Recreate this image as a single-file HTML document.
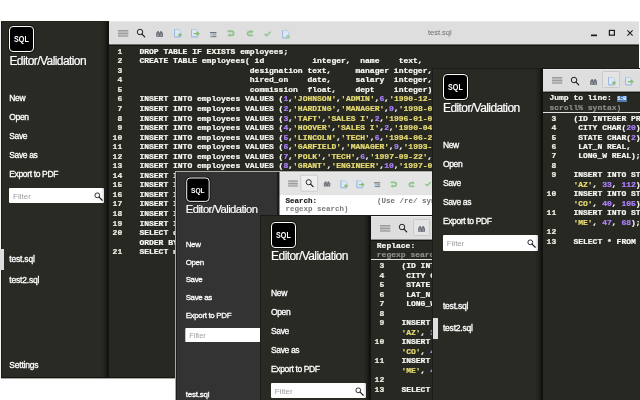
<!DOCTYPE html><html><head><meta charset="utf-8"><title>SQL Editor</title><style>
html,body{margin:0;padding:0}
#all{position:absolute;left:0;top:0;width:640px;height:400px;overflow:hidden;will-change:transform}
body{width:640px;height:400px;background:#fff;position:relative;overflow:hidden;font-family:"Liberation Sans",sans-serif}
.win{position:absolute;overflow:hidden;background:#272822}
.side{position:absolute;left:0;top:0;bottom:0;width:109px;color:#fff}
.sin{position:absolute;width:109px;height:400px}
.divd{position:absolute;top:0;bottom:0}
.logo{position:absolute;left:10.5px;top:5.6px;width:23px;height:24px;border:1.1px solid #fff;border-radius:4px;background:#000;box-shadow:0 0 0 0.9px #141412;color:#fff;font-size:8.2px;text-align:center;line-height:25px}
.logo span{display:inline-block;font-weight:bold;transform:scaleX(0.87)}
.ttl{position:absolute;left:10.5px;top:33.1px;font-size:12px;line-height:15px;letter-spacing:-0.58px;white-space:nowrap;-webkit-text-stroke:0.2px #fff}
.mi{position:absolute;left:10.4px;font-size:8.5px;line-height:12px;letter-spacing:-0.36px;white-space:nowrap;-webkit-text-stroke:0.3px #fff}
.fi{letter-spacing:-0.2px}
.flt{position:absolute;left:10px;top:167px;height:15.3px;width:95.2px;background:#fff;border-radius:1px}
.flt span{position:absolute;left:4.2px;top:4.2px;font-size:8px;line-height:10px;color:#a0a0a0}
.flt .mag{position:absolute;right:1.6px;top:4.2px}
.selbar{position:absolute;left:0;width:5.2px;height:21.2px;background:#dedede}
.main{position:absolute;top:0;right:0;bottom:0}
.tb{position:absolute;left:0;right:0;top:0;background:#dedede;box-shadow:inset 0 1px 0 #ececec}
.tbm{position:absolute;left:0;right:0;height:1px}
.ic{position:absolute;line-height:0}
.act{position:absolute;background:#e4e4e4;border:1px solid #c9c9c9;box-sizing:border-box;border-radius:1.5px}
.code{position:absolute;left:0;right:0;font-family:"Liberation Mono",monospace;font-weight:bold;font-size:8px;line-height:9.55px;color:#f8f8f2;white-space:pre;-webkit-text-stroke:0.22px}
.ln{height:9.55px;position:relative}
.no{position:absolute;left:0;width:13.2px;text-align:right;color:#f0efe4}
.tx{position:absolute;left:30.4px}
i{font-style:normal}
.s{color:#e6db74}
.n{color:#ae81ff}
.dlg{position:absolute;left:0;right:0;font-family:"Liberation Mono",monospace;font-weight:bold;font-size:8px;line-height:9.4px;white-space:pre;-webkit-text-stroke:0.2px}
.title{position:absolute;font-size:7.5px;line-height:10px;color:#6d6d6d}
.wc{position:absolute;top:0}
</style></head><body><div id="all"><div class="win" style="left:-1px;top:21px;width:640px;height:357px;"><div class="side" style="background:#292a24"><div class="sin" style="left:-0.1px;top:-0.3px"><div class="logo"><span>SQL</span></div><div class="ttl">Editor/Validation</div><div class="mi" style="top:70.9px">New</div><div class="mi" style="top:89.9px">Open</div><div class="mi" style="top:108.9px">Save</div><div class="mi" style="top:127.9px">Save as</div><div class="mi" style="top:146.9px">Export to PDF</div><div class="flt"><span>Filter</span><svg class="mag" width="9" height="9" viewBox="0 0 9 9"><circle cx="3.3" cy="3.3" r="2.4" fill="none" stroke="#222" stroke-width="0.95"/><path d="M5.1 5.1 L8.2 8.2" stroke="#222" stroke-width="1.25" stroke-linecap="round"/></svg></div><div class="mi fi" style="top:232.2px">test.sql</div><div class="mi fi" style="top:253.4px">test2.sql</div><div class="mi fi" style="top:338.2px">Settings</div><div class="selbar" style="top:228.1px"></div></div></div><div class="divd" style="background:linear-gradient(to right,rgba(0,0,0,0),rgba(0,0,0,0.18) 45%,#121210 82%,#121210);left:102.39999999999999px;width:7.800000000000001px"></div><div class="main" style="background:#272822;left:110px"><div class="tb" style="height:23px"><div class="ic" style="left:8.85px;top:8.5px"><svg width="10.35" height="6.8" viewBox="0 0 10.35 6.8" style="overflow:visible"><rect x="0" y="0" width="10.35" height="1.55" fill="#9b9b9b"/><rect x="0" y="2.5" width="10.35" height="1.9" fill="#9b9b9b"/><rect x="0" y="5.3" width="10.35" height="1.4" fill="#9b9b9b"/></svg></div><div class="ic" style="left:26.95px;top:7.0px"><svg width="11" height="11" viewBox="0 0 11 11" style="overflow:visible"><circle cx="4" cy="4" r="2.75" fill="none" stroke="#1a1a1a" stroke-width="0.95"/><path d="M6.05 6.05 L8.7 8.8" stroke="#1a1a1a" stroke-width="1.2" stroke-linecap="round"/></svg></div><div class="ic" style="left:46.85px;top:9.7px"><svg width="7.2" height="5.9" viewBox="0 0 7.2 5.9" style="overflow:visible;opacity:0.86"><path d="M1.2 0.3 H3 V1.6 H4.2 V0.3 H6 V1.6 H7 V5.7 H0.2 V1.6 H1.2 Z" fill="#4f555f"/><rect x="1" y="3.2" width="1.9" height="1.8" fill="#8a9099"/><rect x="4.3" y="3.2" width="1.9" height="1.8" fill="#8a9099"/><rect x="0.2" y="2.1" width="6.8" height="0.6" fill="#7b818a"/></svg></div><div class="ic" style="left:64.95px;top:8.2px"><svg width="7.8" height="8.6" viewBox="0 0 7.8 8.6" style="overflow:visible;opacity:0.86"><path d="M0.5 0.4 H4.8 L6.9 2.4 V7.9 H0.5 Z" fill="#dbe8f6" stroke="#a6c2e3" stroke-width="0.8"/><path d="M0.5 0.4 V7.9 H6.9" fill="none" stroke="#8fb2dd" stroke-width="0.9"/><path d="M3.9 5.9 H6.2 M5.3 4.5 L7.2 5.9 L5.3 7.3" stroke="#78b865" stroke-width="1.3" fill="none"/></svg></div><div class="ic" style="left:82.35px;top:8.2px"><svg width="8.4" height="8.6" viewBox="0 0 8.4 8.6" style="overflow:visible;opacity:0.86"><path d="M0.5 0.4 H4.8 L6.9 2.4 V7.9 H0.5 Z" fill="#dbe8f6" stroke="#a6c2e3" stroke-width="0.8"/><path d="M0.5 0.4 V7.9 H6.9" fill="none" stroke="#8fb2dd" stroke-width="0.9"/><path d="M2.8 4.6 H6.6 M5.7 3 L7.8 4.6 L5.7 6.2" stroke="#78b865" stroke-width="1.4" fill="none"/></svg></div><div class="ic" style="left:101.35px;top:10.5px"><svg width="6.5" height="5.4" viewBox="0 0 6.5 5.4" style="overflow:visible;opacity:0.86"><rect x="0" y="0" width="6.4" height="1.3" fill="#5f6368"/><rect x="0" y="1.8" width="2.6" height="1.7" fill="#9cc4ec"/><rect x="2.6" y="1.8" width="3.8" height="1.7" fill="#9a9da2"/><rect x="0.6" y="4" width="5.8" height="1.2" fill="#74787d"/></svg></div><div class="ic" style="left:118.45px;top:9.3px"><svg width="7.6" height="6.4" viewBox="0 0 7.6 6.4" style="overflow:visible;opacity:0.86"><path d="M0.6 1.2 H4.6 A2 2 0 0 1 4.6 5.2 H2.6" stroke="#84c181" stroke-width="1.9" fill="none"/><path d="M3 3.3 L0.4 5.2 L3 7 Z" fill="#84c181"/></svg></div><div class="ic" style="left:136.95px;top:9.3px"><svg width="7.6" height="6.4" viewBox="0 0 7.6 6.4" style="overflow:visible;opacity:0.86"><path d="M5 1.7 H3 A1.9 1.9 0 0 0 3 5.4 H7" stroke="#84c181" stroke-width="1.9" fill="none"/><path d="M4.6 -0.4 L7.6 1.7 L4.6 3.8 Z" fill="#84c181"/></svg></div><div class="ic" style="left:154.95px;top:10.0px"><svg width="7" height="5.6" viewBox="0 0 7 5.6" style="overflow:visible;opacity:0.86"><path d="M0.7 2.9 L2.7 4.7 L6.5 0.7" stroke="#84c181" stroke-width="1.6" fill="none"/></svg></div><div class="ic" style="left:173.35px;top:8.5px"><svg width="7.8" height="8.4" viewBox="0 0 7.8 8.4" style="overflow:visible;opacity:0.86"><path d="M0.5 0.4 H4.8 L6.9 2.4 V7.9 H0.5 Z" fill="#dbe8f6" stroke="#a6c2e3" stroke-width="0.8"/><path d="M0.5 0.4 V7.9 H6.9" fill="none" stroke="#8fb2dd" stroke-width="0.9"/><circle cx="6" cy="6.8" r="1.75" fill="#7fbf72"/><path d="M5.5 5.9 L6.9 6.8 L5.5 7.7 Z" fill="#f4f8ff"/></svg></div><div class="tbm" style="top:23px;background:#6e6e6e"></div><div class="tbm" style="top:24px;background:#141412"></div><div class="title" style="left:318.9px;top:6.9px">test.sql</div><svg class="wc" style="left:471px" width="60" height="24" viewBox="0 0 60 24"><path d="M11 14.35 H17" stroke="#1c1c1c" stroke-width="1.7"/><rect x="29.4" y="9.4" width="5" height="4.8" fill="none" stroke="#1c1c1c" stroke-width="1.2"/><path d="M47.4 9.4 L52.6 14.6 M52.6 9.4 L47.4 14.6" stroke="#1c1c1c" stroke-width="1.1"/></svg></div><div class="code" style="top:25.7px;line-height:9.55px"><div class="ln" style="height:9.55px"><span class="no">1</span><span class="tx">DROP TABLE IF EXISTS employees;</span></div><div class="ln" style="height:9.55px"><span class="no">2</span><span class="tx">CREATE TABLE employees( id          integer,  name    text,</span></div><div class="ln" style="height:9.55px"><span class="no">3</span><span class="tx">                       designation text,     manager integer,</span></div><div class="ln" style="height:9.55px"><span class="no">4</span><span class="tx">                       hired_on    date,     salary  integer,</span></div><div class="ln" style="height:9.55px"><span class="no">5</span><span class="tx">                       commission  float,    dept    integer);</span></div><div class="ln" style="height:9.55px"><span class="no">6</span><span class="tx">INSERT INTO employees VALUES (<i class="n">1</i>,<i class="s">'JOHNSON'</i>,<i class="s">'ADMIN'</i>,<i class="n">6</i>,<i class="s">'1990-12-17'</i>,<i class="n">18000</i>,NULL,<i class="n">4</i>);</span></div><div class="ln" style="height:9.55px"><span class="no">7</span><span class="tx">INSERT INTO employees VALUES (<i class="n">2</i>,<i class="s">'HARDING'</i>,<i class="s">'MANAGER'</i>,<i class="n">9</i>,<i class="s">'1998-02-02'</i>,<i class="n">52000</i>,<i class="n">300</i>,<i class="n">3</i>);</span></div><div class="ln" style="height:9.55px"><span class="no">8</span><span class="tx">INSERT INTO employees VALUES (<i class="n">3</i>,<i class="s">'TAFT'</i>,<i class="s">'SALES I'</i>,<i class="n">2</i>,<i class="s">'1996-01-02'</i>,<i class="n">25000</i>,<i class="n">500</i>,<i class="n">3</i>);</span></div><div class="ln" style="height:9.55px"><span class="no">9</span><span class="tx">INSERT INTO employees VALUES (<i class="n">4</i>,<i class="s">'HOOVER'</i>,<i class="s">'SALES I'</i>,<i class="n">2</i>,<i class="s">'1990-04-02'</i>,<i class="n">27000</i>,NULL,<i class="n">3</i>);</span></div><div class="ln" style="height:9.55px"><span class="no">10</span><span class="tx">INSERT INTO employees VALUES (<i class="n">5</i>,<i class="s">'LINCOLN'</i>,<i class="s">'TECH'</i>,<i class="n">6</i>,<i class="s">'1994-06-23'</i>,<i class="n">22500</i>,<i class="n">1400</i>,<i class="n">4</i>);</span></div><div class="ln" style="height:9.55px"><span class="no">11</span><span class="tx">INSERT INTO employees VALUES (<i class="n">6</i>,<i class="s">'GARFIELD'</i>,<i class="s">'MANAGER'</i>,<i class="n">9</i>,<i class="s">'1993-05-01'</i>,<i class="n">54000</i>,NULL,<i class="n">4</i>);</span></div><div class="ln" style="height:9.55px"><span class="no">12</span><span class="tx">INSERT INTO employees VALUES (<i class="n">7</i>,<i class="s">'POLK'</i>,<i class="s">'TECH'</i>,<i class="n">6</i>,<i class="s">'1997-09-22'</i>,<i class="n">25000</i>,NULL,<i class="n">4</i>);</span></div><div class="ln" style="height:9.55px"><span class="no">13</span><span class="tx">INSERT INTO employees VALUES (<i class="n">8</i>,<i class="s">'GRANT'</i>,<i class="s">'ENGINEER'</i>,<i class="n">10</i>,<i class="s">'1997-03-30'</i>,<i class="n">32000</i>,NULL,<i class="n">2</i>);</span></div><div class="ln" style="height:9.55px"><span class="no">14</span><span class="tx">INSERT INTO employees VALUES (<i class="n">9</i>,<i class="s">'JACKSON'</i>,<i class="s">'CEO'</i>,NULL,<i class="s">'1990-01-01'</i>,<i class="n">75000</i>,NULL,<i class="n">4</i>);</span></div><div class="ln" style="height:9.55px"><span class="no">15</span><span class="tx">INSERT INTO employees VALUES (<i class="n">10</i>,<i class="s">'FILLMORE'</i>,<i class="s">'MANAGER'</i>,<i class="n">9</i>,<i class="s">'1994-08-09'</i>,<i class="n">56000</i>,NULL,<i class="n">2</i>);</span></div><div class="ln" style="height:9.55px"><span class="no">16</span><span class="tx">INSERT INTO employees VALUES (<i class="n">11</i>,<i class="s">'ADAMS'</i>,<i class="s">'ENGINEER'</i>,<i class="n">10</i>,<i class="s">'1996-03-15'</i>,<i class="n">34000</i>,NULL,<i class="n">2</i>);</span></div><div class="ln" style="height:9.55px"><span class="no">17</span><span class="tx">INSERT INTO employees VALUES (<i class="n">12</i>,<i class="s">'WASHINGTON'</i>,<i class="s">'ADMIN'</i>,<i class="n">6</i>,<i class="s">'1998-04-16'</i>,<i class="n">18000</i>,NULL,<i class="n">4</i>);</span></div><div class="ln" style="height:9.55px"><span class="no">18</span><span class="tx">INSERT INTO employees VALUES (<i class="n">13</i>,<i class="s">'MONROE'</i>,<i class="s">'ENGINEER'</i>,<i class="n">10</i>,<i class="s">'2000-12-03'</i>,<i class="n">30000</i>,NULL,<i class="n">2</i>);</span></div><div class="ln" style="height:9.55px"><span class="no">19</span><span class="tx">INSERT INTO employees VALUES (<i class="n">14</i>,<i class="s">'ROOSEVELT'</i>,<i class="s">'CPA'</i>,<i class="n">9</i>,<i class="s">'1995-10-12'</i>,<i class="n">35000</i>,NULL,<i class="n">1</i>);</span></div><div class="ln" style="height:9.55px"><span class="no">20</span><span class="tx">SELECT designation,COUNT(*) AS nbr, (AVG(salary)) AS avg_salary FROM employees GROUP BY designation</span></div><div class="ln" style="height:9.55px"><span class="no"></span><span class="tx">ORDER BY avg_salary DESC;</span></div><div class="ln" style="height:9.55px"><span class="no">21</span><span class="tx">SELECT name,hired_on FROM employees ORDER BY hired_on;</span></div></div></div></div><div style="position:absolute;left:0;top:21px;width:1px;height:357px;background:#f4f4f4"></div><div style="position:absolute;left:1px;top:21px;width:1px;height:357px;background:#1b1b19"></div><div style="position:absolute;left:1px;top:21px;width:108px;height:1px;background:#222220"></div><div style="position:absolute;left:1px;top:377px;width:638px;height:1px;background:#151513"></div><div style="position:absolute;left:1px;top:378px;width:638px;height:1px;background:#a8a8a6"></div><div style="position:absolute;left:0;top:249px;width:4px;height:21px;background:#dedede"></div><div class="win" style="left:176.2px;top:172.2px;width:300px;height:260px;transform:scale(0.935);transform-origin:0 0;border-left:1.1px solid #b4b4b4;border-top:1.1px solid #b4b4b4;margin:-1.1px 0 0 -1.1px;"><div class="side" style="background:#333333"><div class="sin" style="left:0px;top:0px"><div class="logo"><span>SQL</span></div><div class="ttl">Editor/Validation</div><div class="mi" style="top:70.9px">New</div><div class="mi" style="top:89.9px">Open</div><div class="mi" style="top:108.9px">Save</div><div class="mi" style="top:127.9px">Save as</div><div class="mi" style="top:146.9px">Export to PDF</div><div class="flt"><span>Filter</span><svg class="mag" width="9" height="9" viewBox="0 0 9 9"><circle cx="3.3" cy="3.3" r="2.4" fill="none" stroke="#222" stroke-width="0.95"/><path d="M5.1 5.1 L8.2 8.2" stroke="#222" stroke-width="1.25" stroke-linecap="round"/></svg></div><div class="mi fi" style="top:232.2px">test.sql</div><div class="mi fi" style="top:253.4px">test2.sql</div><div class="mi fi" style="top:338.2px">Settings</div></div></div><div class="divd" style="background:#1c1c1c;left:108.0px;width:3.2px"></div><div class="main" style="background:#fff;left:110.7px"><div class="tb" style="height:23.7px;background:#e4e4e4"><div class="ic" style="left:8.95px;top:8.8px"><svg width="10.35" height="6.8" viewBox="0 0 10.35 6.8" style="overflow:visible"><rect x="0" y="0" width="10.35" height="1.55" fill="#9b9b9b"/><rect x="0" y="2.5" width="10.35" height="1.9" fill="#9b9b9b"/><rect x="0" y="5.3" width="10.35" height="1.4" fill="#9b9b9b"/></svg></div><div class="act" style="left:22.45px;top:3.1px;width:18.4px;height:18.4px;background:#efefef"></div><div class="ic" style="left:27.05px;top:7.3px"><svg width="11" height="11" viewBox="0 0 11 11" style="overflow:visible"><circle cx="4" cy="4" r="2.75" fill="none" stroke="#1a1a1a" stroke-width="0.95"/><path d="M6.05 6.05 L8.7 8.8" stroke="#1a1a1a" stroke-width="1.2" stroke-linecap="round"/></svg></div><div class="ic" style="left:46.95px;top:10.0px"><svg width="7.2" height="5.9" viewBox="0 0 7.2 5.9" style="overflow:visible;opacity:0.86"><path d="M1.2 0.3 H3 V1.6 H4.2 V0.3 H6 V1.6 H7 V5.7 H0.2 V1.6 H1.2 Z" fill="#4f555f"/><rect x="1" y="3.2" width="1.9" height="1.8" fill="#8a9099"/><rect x="4.3" y="3.2" width="1.9" height="1.8" fill="#8a9099"/><rect x="0.2" y="2.1" width="6.8" height="0.6" fill="#7b818a"/></svg></div><div class="ic" style="left:65.05px;top:8.5px"><svg width="7.8" height="8.6" viewBox="0 0 7.8 8.6" style="overflow:visible;opacity:0.86"><path d="M0.5 0.4 H4.8 L6.9 2.4 V7.9 H0.5 Z" fill="#dbe8f6" stroke="#a6c2e3" stroke-width="0.8"/><path d="M0.5 0.4 V7.9 H6.9" fill="none" stroke="#8fb2dd" stroke-width="0.9"/><path d="M3.9 5.9 H6.2 M5.3 4.5 L7.2 5.9 L5.3 7.3" stroke="#78b865" stroke-width="1.3" fill="none"/></svg></div><div class="ic" style="left:82.45px;top:8.5px"><svg width="8.4" height="8.6" viewBox="0 0 8.4 8.6" style="overflow:visible;opacity:0.86"><path d="M0.5 0.4 H4.8 L6.9 2.4 V7.9 H0.5 Z" fill="#dbe8f6" stroke="#a6c2e3" stroke-width="0.8"/><path d="M0.5 0.4 V7.9 H6.9" fill="none" stroke="#8fb2dd" stroke-width="0.9"/><path d="M2.8 4.6 H6.6 M5.7 3 L7.8 4.6 L5.7 6.2" stroke="#78b865" stroke-width="1.4" fill="none"/></svg></div><div class="ic" style="left:101.45px;top:10.8px"><svg width="6.5" height="5.4" viewBox="0 0 6.5 5.4" style="overflow:visible;opacity:0.86"><rect x="0" y="0" width="6.4" height="1.3" fill="#5f6368"/><rect x="0" y="1.8" width="2.6" height="1.7" fill="#9cc4ec"/><rect x="2.6" y="1.8" width="3.8" height="1.7" fill="#9a9da2"/><rect x="0.6" y="4" width="5.8" height="1.2" fill="#74787d"/></svg></div><div class="ic" style="left:118.55px;top:9.6px"><svg width="7.6" height="6.4" viewBox="0 0 7.6 6.4" style="overflow:visible;opacity:0.86"><path d="M0.6 1.2 H4.6 A2 2 0 0 1 4.6 5.2 H2.6" stroke="#84c181" stroke-width="1.9" fill="none"/><path d="M3 3.3 L0.4 5.2 L3 7 Z" fill="#84c181"/></svg></div><div class="ic" style="left:137.05px;top:9.6px"><svg width="7.6" height="6.4" viewBox="0 0 7.6 6.4" style="overflow:visible;opacity:0.86"><path d="M5 1.7 H3 A1.9 1.9 0 0 0 3 5.4 H7" stroke="#84c181" stroke-width="1.9" fill="none"/><path d="M4.6 -0.4 L7.6 1.7 L4.6 3.8 Z" fill="#84c181"/></svg></div><div class="ic" style="left:155.05px;top:10.3px"><svg width="7" height="5.6" viewBox="0 0 7 5.6" style="overflow:visible;opacity:0.86"><path d="M0.7 2.9 L2.7 4.7 L6.5 0.7" stroke="#84c181" stroke-width="1.6" fill="none"/></svg></div><div class="ic" style="left:173.45px;top:8.8px"><svg width="7.8" height="8.4" viewBox="0 0 7.8 8.4" style="overflow:visible;opacity:0.86"><path d="M0.5 0.4 H4.8 L6.9 2.4 V7.9 H0.5 Z" fill="#dbe8f6" stroke="#a6c2e3" stroke-width="0.8"/><path d="M0.5 0.4 V7.9 H6.9" fill="none" stroke="#8fb2dd" stroke-width="0.9"/><circle cx="6" cy="6.8" r="1.75" fill="#7fbf72"/><path d="M5.5 5.9 L6.9 6.8 L5.5 7.7 Z" fill="#f4f8ff"/></svg></div><div class="tbm" style="top:23.7px;background:#d8d8d8"></div></div><div class="dlg" style="top:24.6px;height:22px;background:#fff;color:#222;line-height:9.1px"><div style="padding:1.4px 0 0 6.6px">Search:<span style="position:absolute;left:104.4px;color:#707070;-webkit-text-stroke:0">(Use /re/ syntax for</span></div><div style="padding-left:6.6px;color:#7a7a7a;-webkit-text-stroke:0">regexp search)</div></div><div style="position:absolute;left:-110.7px;top:0;width:1.1px;height:300px;background:#1d1d1d"></div></div></div><div class="win" style="left:261px;top:216px;width:172px;height:190px;border-left:1px solid #1b1b19;border-top:1px solid #1b1b19;margin:-1px 0 0 -1px;"><div class="side" style="background:#292a24"><div class="sin" style="left:-0.4px;top:0.1px"><div class="logo"><span>SQL</span></div><div class="ttl">Editor/Validation</div><div class="mi" style="top:70.9px">New</div><div class="mi" style="top:89.9px">Open</div><div class="mi" style="top:108.9px">Save</div><div class="mi" style="top:127.9px">Save as</div><div class="mi" style="top:146.9px">Export to PDF</div><div class="flt"><span>Filter</span><svg class="mag" width="9" height="9" viewBox="0 0 9 9"><circle cx="3.3" cy="3.3" r="2.4" fill="none" stroke="#222" stroke-width="0.95"/><path d="M5.1 5.1 L8.2 8.2" stroke="#222" stroke-width="1.25" stroke-linecap="round"/></svg></div><div class="mi fi" style="top:232.2px">test.sql</div><div class="mi fi" style="top:253.4px">test2.sql</div><div class="mi fi" style="top:338.2px">Settings</div><div class="selbar" style="top:228.1px"></div></div></div><div class="divd" style="background:linear-gradient(to right,rgba(0,0,0,0),rgba(0,0,0,0.18) 45%,#121210 82%,#121210);left:102.39999999999999px;width:7.800000000000001px"></div><div class="main" style="background:#272822;left:110px"><div class="tb" style="height:23px"><div class="ic" style="left:8.95px;top:8.8px"><svg width="10.35" height="6.8" viewBox="0 0 10.35 6.8" style="overflow:visible"><rect x="0" y="0" width="10.35" height="1.55" fill="#9b9b9b"/><rect x="0" y="2.5" width="10.35" height="1.9" fill="#9b9b9b"/><rect x="0" y="5.3" width="10.35" height="1.4" fill="#9b9b9b"/></svg></div><div class="ic" style="left:27.05px;top:7.3px"><svg width="11" height="11" viewBox="0 0 11 11" style="overflow:visible"><circle cx="4" cy="4" r="2.75" fill="none" stroke="#1a1a1a" stroke-width="0.95"/><path d="M6.05 6.05 L8.7 8.8" stroke="#1a1a1a" stroke-width="1.2" stroke-linecap="round"/></svg></div><div class="act" style="left:41.65px;top:2.8px;width:17.2px;height:17.2px"></div><div class="ic" style="left:46.95px;top:10.0px"><svg width="7.2" height="5.9" viewBox="0 0 7.2 5.9" style="overflow:visible;opacity:0.86"><path d="M1.2 0.3 H3 V1.6 H4.2 V0.3 H6 V1.6 H7 V5.7 H0.2 V1.6 H1.2 Z" fill="#4f555f"/><rect x="1" y="3.2" width="1.9" height="1.8" fill="#8a9099"/><rect x="4.3" y="3.2" width="1.9" height="1.8" fill="#8a9099"/><rect x="0.2" y="2.1" width="6.8" height="0.6" fill="#7b818a"/></svg></div><div class="ic" style="left:65.05px;top:8.5px"><svg width="7.8" height="8.6" viewBox="0 0 7.8 8.6" style="overflow:visible;opacity:0.86"><path d="M0.5 0.4 H4.8 L6.9 2.4 V7.9 H0.5 Z" fill="#dbe8f6" stroke="#a6c2e3" stroke-width="0.8"/><path d="M0.5 0.4 V7.9 H6.9" fill="none" stroke="#8fb2dd" stroke-width="0.9"/><path d="M3.9 5.9 H6.2 M5.3 4.5 L7.2 5.9 L5.3 7.3" stroke="#78b865" stroke-width="1.3" fill="none"/></svg></div><div class="tbm" style="top:23px;background:#8a8a8a"></div><div class="tbm" style="top:24px;background:#141412"></div></div><div class="dlg" style="top:24.6px;height:18.6px;color:#f8f8f2;border-bottom:1px solid #e4e4e4"><div style="padding-left:5.8px">Replace:</div><div style="padding-left:5.8px;color:#8c8c88">regexp search)</div></div><div class="code" style="top:45.3px;line-height:9.5px"><div class="ln" style="height:9.5px"><span class="no">3</span><span class="tx">(ID INTEGER PRIMARY KEY,</span></div><div class="ln" style="height:9.5px"><span class="no">4</span><span class="tx"> CITY CHAR(<i class="n">20</i>),</span></div><div class="ln" style="height:9.5px"><span class="no">5</span><span class="tx"> STATE CHAR(<i class="n">2</i>),</span></div><div class="ln" style="height:9.5px"><span class="no">6</span><span class="tx"> LAT_N REAL,</span></div><div class="ln" style="height:9.5px"><span class="no">7</span><span class="tx"> LONG_W REAL);</span></div><div class="ln" style="height:9.5px"><span class="no">8</span><span class="tx"></span></div><div class="ln" style="height:9.5px"><span class="no">9</span><span class="tx">INSERT INTO STATION VALUES (<i class="n">13</i>, <i class="s">'Phoenix'</i>,</span></div><div class="ln" style="height:9.5px"><span class="no"></span><span class="tx"><i class="s">'AZ'</i>, <i class="n">33</i>, <i class="n">112</i>);</span></div><div class="ln" style="height:9.5px"><span class="no">10</span><span class="tx">INSERT INTO STATION VALUES (<i class="n">44</i>, <i class="s">'Denver'</i>,</span></div><div class="ln" style="height:9.5px"><span class="no"></span><span class="tx"><i class="s">'CO'</i>, <i class="n">40</i>, <i class="n">105</i>);</span></div><div class="ln" style="height:9.5px"><span class="no">11</span><span class="tx">INSERT INTO STATION VALUES (<i class="n">66</i>, <i class="s">'Caribou'</i>,</span></div><div class="ln" style="height:9.5px"><span class="no"></span><span class="tx"><i class="s">'ME'</i>, <i class="n">47</i>, <i class="n">68</i>);</span></div><div class="ln" style="height:9.5px"><span class="no">12</span><span class="tx"></span></div><div class="ln" style="height:9.5px"><span class="no">13</span><span class="tx">SELECT * FROM STATION;</span></div></div></div></div><div class="win" style="left:433px;top:69px;width:210px;height:335px;border-left:1px solid #1b1b19;border-top:1px solid #1b1b19;margin:-1px 0 0 -1px;"><div class="side" style="background:#292a24"><div class="sin" style="left:-0.5px;top:-0.8px"><div class="logo"><span>SQL</span></div><div class="ttl">Editor/Validation</div><div class="mi" style="top:70.9px">New</div><div class="mi" style="top:89.9px">Open</div><div class="mi" style="top:108.9px">Save</div><div class="mi" style="top:127.9px">Save as</div><div class="mi" style="top:146.9px">Export to PDF</div><div class="flt"><span>Filter</span><svg class="mag" width="9" height="9" viewBox="0 0 9 9"><circle cx="3.3" cy="3.3" r="2.4" fill="none" stroke="#222" stroke-width="0.95"/><path d="M5.1 5.1 L8.2 8.2" stroke="#222" stroke-width="1.25" stroke-linecap="round"/></svg></div><div class="mi fi" style="top:232.2px">test.sql</div><div class="mi fi" style="top:253.4px">test2.sql</div><div class="mi fi" style="top:338.2px">Settings</div><div class="selbar" style="top:249.3px"></div></div></div><div class="divd" style="background:linear-gradient(to right,rgba(0,0,0,0),rgba(0,0,0,0.18) 45%,#121210 82%,#121210);left:101.8px;width:8.200000000000001px"></div><div class="main" style="background:#272822;left:110px"><div class="tb" style="height:22px"><div class="ic" style="left:8.95px;top:8.3px"><svg width="10.35" height="6.8" viewBox="0 0 10.35 6.8" style="overflow:visible"><rect x="0" y="0" width="10.35" height="1.55" fill="#9b9b9b"/><rect x="0" y="2.5" width="10.35" height="1.9" fill="#9b9b9b"/><rect x="0" y="5.3" width="10.35" height="1.4" fill="#9b9b9b"/></svg></div><div class="ic" style="left:27.05px;top:6.8px"><svg width="11" height="11" viewBox="0 0 11 11" style="overflow:visible"><circle cx="4" cy="4" r="2.75" fill="none" stroke="#1a1a1a" stroke-width="0.95"/><path d="M6.05 6.05 L8.7 8.8" stroke="#1a1a1a" stroke-width="1.2" stroke-linecap="round"/></svg></div><div class="ic" style="left:46.95px;top:9.5px"><svg width="7.2" height="5.9" viewBox="0 0 7.2 5.9" style="overflow:visible;opacity:0.86"><path d="M1.2 0.3 H3 V1.6 H4.2 V0.3 H6 V1.6 H7 V5.7 H0.2 V1.6 H1.2 Z" fill="#4f555f"/><rect x="1" y="3.2" width="1.9" height="1.8" fill="#8a9099"/><rect x="4.3" y="3.2" width="1.9" height="1.8" fill="#8a9099"/><rect x="0.2" y="2.1" width="6.8" height="0.6" fill="#7b818a"/></svg></div><div class="act" style="left:59.45px;top:2.3px;width:17.2px;height:17.2px"></div><div class="ic" style="left:65.05px;top:8.0px"><svg width="7.8" height="8.6" viewBox="0 0 7.8 8.6" style="overflow:visible;opacity:0.86"><path d="M0.5 0.4 H4.8 L6.9 2.4 V7.9 H0.5 Z" fill="#dbe8f6" stroke="#a6c2e3" stroke-width="0.8"/><path d="M0.5 0.4 V7.9 H6.9" fill="none" stroke="#8fb2dd" stroke-width="0.9"/><path d="M3.9 5.9 H6.2 M5.3 4.5 L7.2 5.9 L5.3 7.3" stroke="#78b865" stroke-width="1.3" fill="none"/></svg></div><div class="ic" style="left:82.45px;top:8.0px"><svg width="8.4" height="8.6" viewBox="0 0 8.4 8.6" style="overflow:visible;opacity:0.86"><path d="M0.5 0.4 H4.8 L6.9 2.4 V7.9 H0.5 Z" fill="#dbe8f6" stroke="#a6c2e3" stroke-width="0.8"/><path d="M0.5 0.4 V7.9 H6.9" fill="none" stroke="#8fb2dd" stroke-width="0.9"/><path d="M2.8 4.6 H6.6 M5.7 3 L7.8 4.6 L5.7 6.2" stroke="#78b865" stroke-width="1.4" fill="none"/></svg></div><div class="tbm" style="top:22px;background:#8a8a8a"></div><div class="tbm" style="top:23px;background:#141412"></div></div><div class="dlg" style="top:24.4px;height:18.8px;color:#f8f8f2;border-bottom:1px solid #e4e4e4"><div style="padding-left:6.4px">Jump to line: <span style="display:inline-block;vertical-align:top;margin-top:2.6px;height:5.6px;width:10px;line-height:5.6px;background:#4c7cb1;color:#e4f0ff;font-size:5.5px;text-align:center;letter-spacing:-0.4px">1:0</span></div><div style="padding-left:6.4px;color:#8c8c88">scroll% syntax)</div></div><div class="code" style="top:44.6px;line-height:9.47px"><div class="ln" style="height:9.47px"><span class="no">3</span><span class="tx">(ID INTEGER PRIMARY KEY,</span></div><div class="ln" style="height:9.47px"><span class="no">4</span><span class="tx"> CITY CHAR(<i class="n">20</i>),</span></div><div class="ln" style="height:9.47px"><span class="no">5</span><span class="tx"> STATE CHAR(<i class="n">2</i>),</span></div><div class="ln" style="height:9.47px"><span class="no">6</span><span class="tx"> LAT_N REAL,</span></div><div class="ln" style="height:9.47px"><span class="no">7</span><span class="tx"> LONG_W REAL);</span></div><div class="ln" style="height:9.47px"><span class="no">8</span><span class="tx"></span></div><div class="ln" style="height:9.47px"><span class="no">9</span><span class="tx">INSERT INTO STATION VALUES (<i class="n">13</i>, <i class="s">'Phoenix'</i>,</span></div><div class="ln" style="height:9.47px"><span class="no"></span><span class="tx"><i class="s">'AZ'</i>, <i class="n">33</i>, <i class="n">112</i>);</span></div><div class="ln" style="height:9.47px"><span class="no">10</span><span class="tx">INSERT INTO STATION VALUES (<i class="n">44</i>, <i class="s">'Denver'</i>,</span></div><div class="ln" style="height:9.47px"><span class="no"></span><span class="tx"><i class="s">'CO'</i>, <i class="n">40</i>, <i class="n">105</i>);</span></div><div class="ln" style="height:9.47px"><span class="no">11</span><span class="tx">INSERT INTO STATION VALUES (<i class="n">66</i>, <i class="s">'Caribou'</i>,</span></div><div class="ln" style="height:9.47px"><span class="no"></span><span class="tx"><i class="s">'ME'</i>, <i class="n">47</i>, <i class="n">68</i>);</span></div><div class="ln" style="height:9.47px"><span class="no">12</span><span class="tx"></span></div><div class="ln" style="height:9.47px"><span class="no">13</span><span class="tx">SELECT * FROM STATION;</span></div></div></div></div></div></body></html>
